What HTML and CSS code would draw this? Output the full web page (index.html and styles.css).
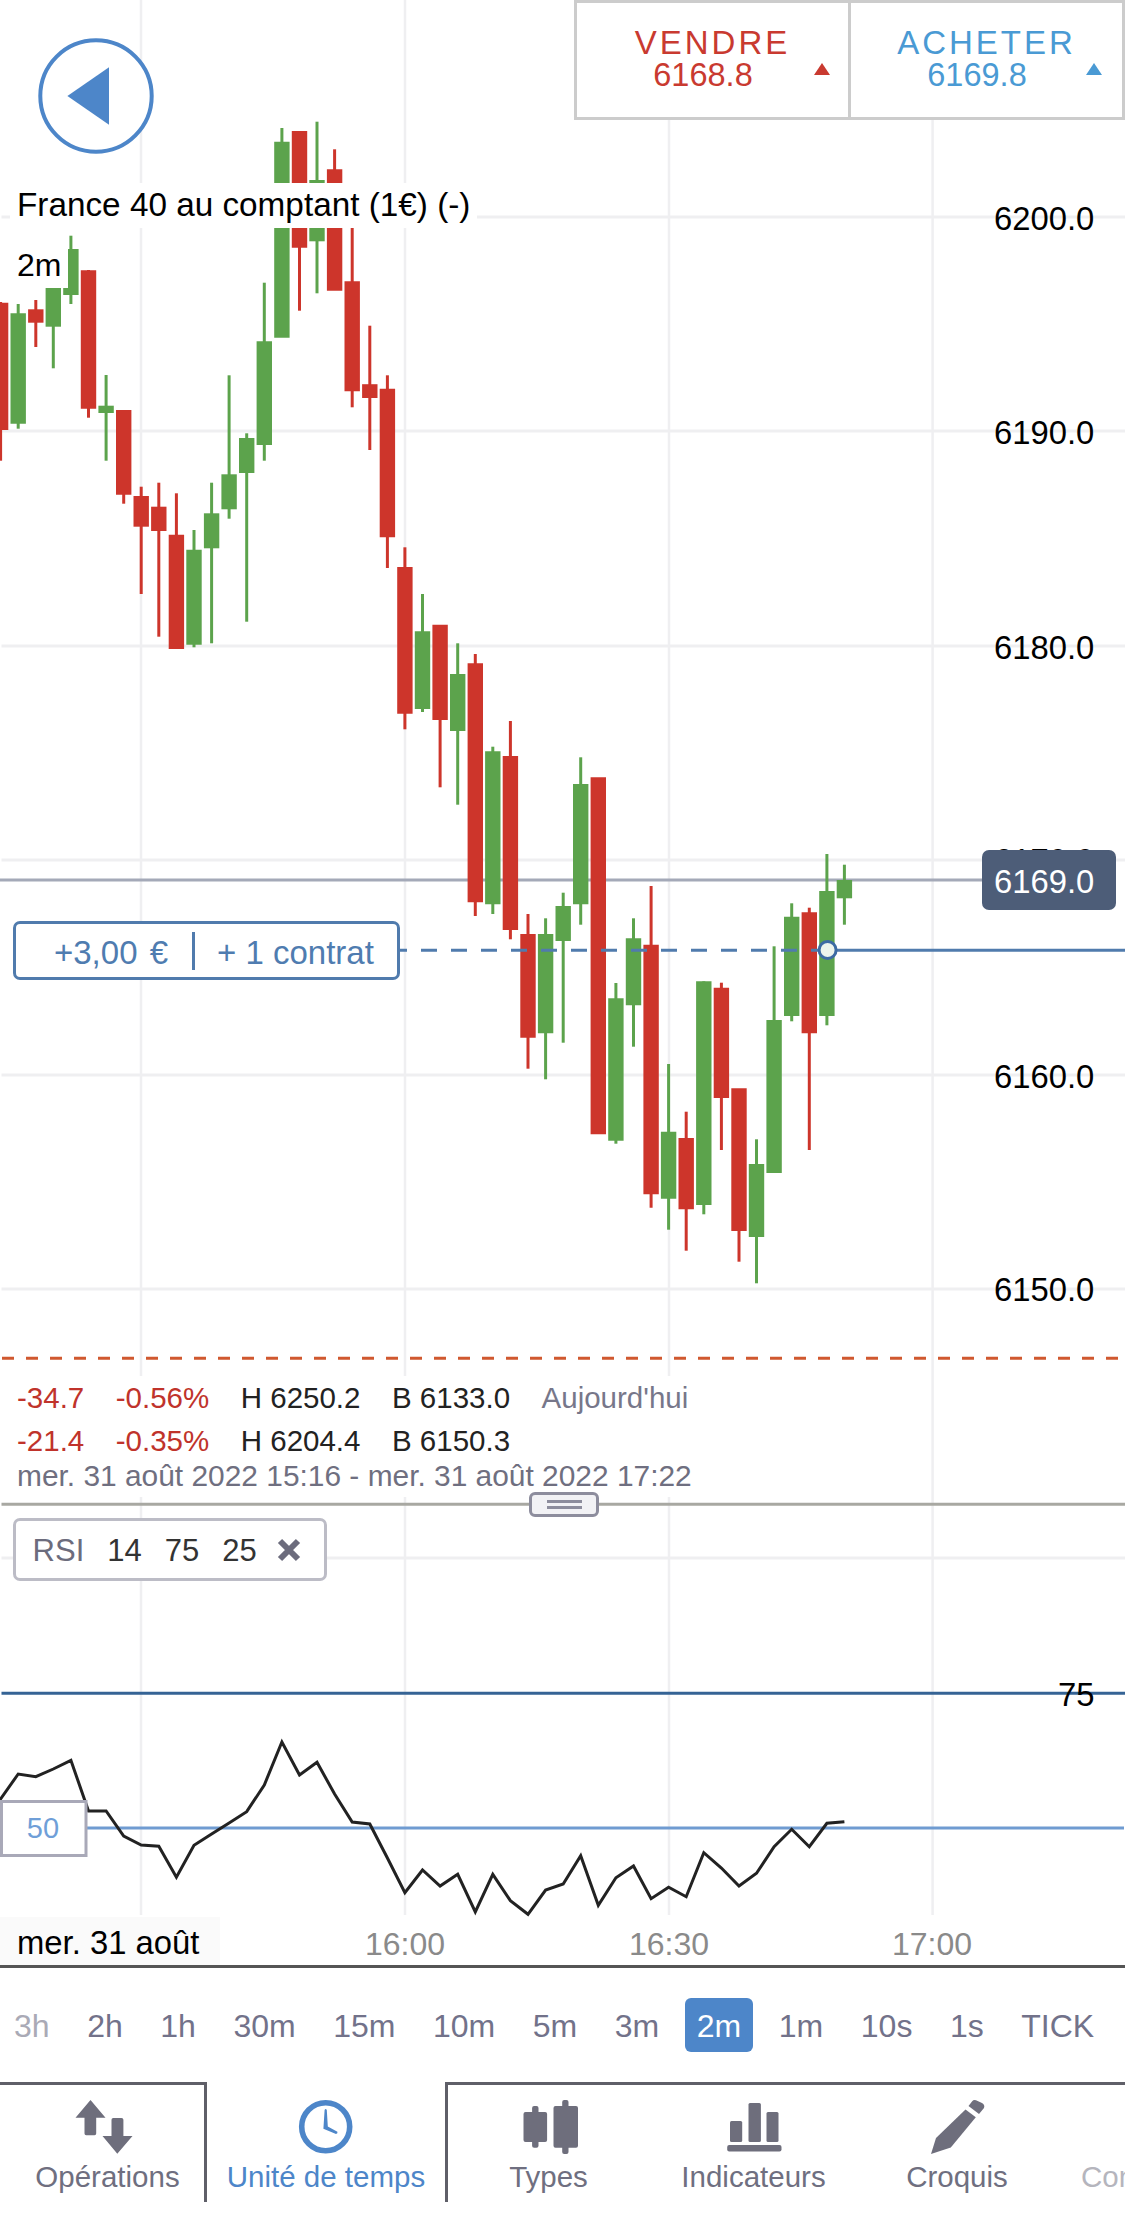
FILE: index.html
```html
<!DOCTYPE html>
<html lang="fr">
<head>
<meta charset="utf-8">
<title>France 40 au comptant</title>
<link rel="stylesheet" href="styles.css">
</head>
<body>
<div class="page">
  <section class="chart">
    <svg class="plot" viewBox="0 0 1125 1965" width="1125" height="1965">
      <g class="grid">
        <path d="M141 0V1915M405 0V1915M669 0V1915M932.6 0V1915"/>
        <path class="grid-h" d="M1.5 217H1125M1.5 431H1125M1.5 646H1125M1.5 860H1125M1.5 1075H1125M1.5 1289H1125M1.5 1558H1125"/>
      </g>
      <path class="last-price" d="M0 880H985"/>
      <g class="dn"><path class="w" d="M0.6 302V460.7"/><path class="b" d="M0.6 302.7V430"/></g>
      <g class="up"><path class="w" d="M18.2 304V428.7"/><path class="b" d="M18.2 313.3V423.7"/></g>
      <g class="dn"><path class="w" d="M35.8 300V347"/><path class="b" d="M35.8 309.3V322.7"/></g>
      <g class="up"><path class="w" d="M53.3 288V368.3"/><path class="b" d="M53.3 280V326.7"/></g>
      <g class="up"><path class="w" d="M70.9 235.7V304"/><path class="b" d="M70.9 249V295"/></g>
      <g class="dn"><path class="w" d="M88.5 270V417.7"/><path class="b" d="M88.5 270.3V408.7"/></g>
      <g class="up"><path class="w" d="M106.1 375V460.7"/><path class="b" d="M106.1 405.7V413"/></g>
      <g class="dn"><path class="w" d="M123.7 410V503.7"/><path class="b" d="M123.7 410V494.7"/></g>
      <g class="dn"><path class="w" d="M141.2 486.7V594"/><path class="b" d="M141.2 496V526.7"/></g>
      <g class="dn"><path class="w" d="M158.8 482.7V636.7"/><path class="b" d="M158.8 506.7V531"/></g>
      <g class="dn"><path class="w" d="M176.4 493.3V649"/><path class="b" d="M176.4 534.7V649"/></g>
      <g class="up"><path class="w" d="M194 530V647.3"/><path class="b" d="M194 549.7V644.7"/></g>
      <g class="up"><path class="w" d="M211.6 482.7V643.3"/><path class="b" d="M211.6 513.3V548.3"/></g>
      <g class="up"><path class="w" d="M229.1 375.3V518.7"/><path class="b" d="M229.1 474.3V509.3"/></g>
      <g class="up"><path class="w" d="M246.7 433.3V621.7"/><path class="b" d="M246.7 438V473"/></g>
      <g class="up"><path class="w" d="M264.3 282.7V460.7"/><path class="b" d="M264.3 341.3V445"/></g>
      <g class="up"><path class="w" d="M281.9 128V337"/><path class="b" d="M281.9 141.7V337.7"/></g>
      <g class="dn"><path class="w" d="M299.5 131V310.7"/><path class="b" d="M299.5 131V247.7"/></g>
      <g class="up"><path class="w" d="M317 121.7V293.3"/><path class="b" d="M317 180V241.3"/></g>
      <g class="dn"><path class="w" d="M334.6 149.3V290"/><path class="b" d="M334.6 169.3V290.7"/></g>
      <g class="dn"><path class="w" d="M352.2 200V407.3"/><path class="b" d="M352.2 281.3V391.3"/></g>
      <g class="dn"><path class="w" d="M369.8 325.7V450"/><path class="b" d="M369.8 384.2V398"/></g>
      <g class="dn"><path class="w" d="M387.4 375.3V568"/><path class="b" d="M387.4 388.7V537.3"/></g>
      <g class="dn"><path class="w" d="M404.9 547.3V729.3"/><path class="b" d="M404.9 567V713.7"/></g>
      <g class="up"><path class="w" d="M422.5 594V712"/><path class="b" d="M422.5 631.3V709"/></g>
      <g class="dn"><path class="w" d="M440.1 625V787.3"/><path class="b" d="M440.1 624.7V720"/></g>
      <g class="up"><path class="w" d="M457.7 643.3V804.7"/><path class="b" d="M457.7 674V731"/></g>
      <g class="dn"><path class="w" d="M475.3 654V916"/><path class="b" d="M475.3 663.3V902.3"/></g>
      <g class="up"><path class="w" d="M492.8 746.7V914"/><path class="b" d="M492.8 751.3V904.3"/></g>
      <g class="dn"><path class="w" d="M510.4 721V939.3"/><path class="b" d="M510.4 756V930"/></g>
      <g class="dn"><path class="w" d="M528 914V1068.7"/><path class="b" d="M528 934V1037.7"/></g>
      <g class="up"><path class="w" d="M545.6 918.3V1079.3"/><path class="b" d="M545.6 934V1033.3"/></g>
      <g class="up"><path class="w" d="M563.2 892.7V1042.7"/><path class="b" d="M563.2 906V941"/></g>
      <g class="up"><path class="w" d="M580.7 757.3V924.7"/><path class="b" d="M580.7 784V904.3"/></g>
      <g class="dn"><path class="w" d="M598.3 778V1134"/><path class="b" d="M598.3 777.3V1134.3"/></g>
      <g class="up"><path class="w" d="M615.9 983V1143.7"/><path class="b" d="M615.9 998.3V1140.7"/></g>
      <g class="up"><path class="w" d="M633.5 918.3V1046.7"/><path class="b" d="M633.5 938.3V1005.3"/></g>
      <g class="dn"><path class="w" d="M651.1 886V1207.7"/><path class="b" d="M651.1 944.7V1194.3"/></g>
      <g class="up"><path class="w" d="M668.6 1064V1229.7"/><path class="b" d="M668.6 1131.7V1198.7"/></g>
      <g class="dn"><path class="w" d="M686.2 1111.7V1250.7"/><path class="b" d="M686.2 1138V1209.3"/></g>
      <g class="up"><path class="w" d="M703.8 981.3V1214.3"/><path class="b" d="M703.8 981.3V1205"/></g>
      <g class="dn"><path class="w" d="M721.4 982.7V1150"/><path class="b" d="M721.4 987.7V1098"/></g>
      <g class="dn"><path class="w" d="M739 1089V1261.7"/><path class="b" d="M739 1088.3V1231"/></g>
      <g class="up"><path class="w" d="M756.5 1139.3V1283.3"/><path class="b" d="M756.5 1164V1237"/></g>
      <g class="up"><path class="w" d="M774.1 946.3V1173"/><path class="b" d="M774.1 1020V1173"/></g>
      <g class="up"><path class="w" d="M791.7 903.3V1021.3"/><path class="b" d="M791.7 916.7V1016"/></g>
      <g class="dn"><path class="w" d="M809.3 907.7V1150"/><path class="b" d="M809.3 912.3V1033.3"/></g>
      <g class="up"><path class="w" d="M826.9 854V1025.3"/><path class="b" d="M826.9 891V1016"/></g>
      <g class="up"><path class="w" d="M844.4 864.7V924.7"/><path class="b" d="M844.4 880V898.3"/></g>
      <path class="pos-dash" d="M391 950.3H818"/>
      <path class="pos-line" d="M837 950.3H1125"/>
      <circle class="pos-dot" cx="827.6" cy="950" r="8.5"/>
      <path class="low-dash" d="M2 1358.3H1118"/>
      <path class="rule" d="M1.5 1504.3H1125"/>
      <text class="tick" x="994" y="230">6200.0</text>
      <text class="tick" x="994" y="444">6190.0</text>
      <text class="tick" x="994" y="659">6180.0</text>
      <text class="tick" x="994" y="872">6170.0</text>
      <text class="tick" x="994" y="1088">6160.0</text>
      <text class="tick" x="994" y="1301">6150.0</text>
      <rect class="last-box" x="982" y="850" width="134" height="60" rx="7"/>
      <text class="tick last-text" x="994" y="892.5">6169.0</text>
      <path class="rsi75" d="M1.5 1693.3H1125"/>
      <path class="rsi50" d="M87 1828H1124"/>
      <polyline class="rsi" points="0,1800 0.6,1799 18.2,1774 35.8,1776.7 53.3,1769 70.9,1760.3 88.5,1811 106.1,1811 123.7,1836 141.2,1845 158.8,1846.3 176.4,1877.3 194,1845.3 211.6,1834 229.1,1823 246.7,1811.7 264.3,1785 281.9,1742 299.5,1775 317,1762.3 334.6,1794 352.2,1822 369.8,1824 387.4,1858 404.9,1892.7 422.5,1870 440.1,1886 457.7,1874.3 475.3,1912 492.8,1874.3 510.4,1900.7 528,1914.3 545.6,1890 563.2,1884 580.7,1855.7 598.3,1905.3 615.9,1877.7 633.5,1866 651.1,1898.7 668.6,1887.3 686.2,1896.7 703.8,1852.7 721.4,1868 739,1886 756.5,1873.3 774.1,1846.7 791.7,1829.3 809.3,1846.7 826.9,1823.3 844.4,1821.7"/>
      <rect class="box50" x="1.5" y="1801.5" width="84.5" height="54"/>
      <text class="text50" x="43" y="1838">50</text>
      <text class="tick" x="1058" y="1706">75</text>
      <text class="time" x="405" y="1955">16:00</text>
      <text class="time" x="669" y="1955">16:30</text>
      <text class="time" x="932" y="1955">17:00</text>
    </svg>

    <div class="quote">
      <button class="quote-btn sell">
        <span class="quote-label">VENDRE</span>
        <span class="quote-price">6168.8</span>
        <i class="tri"></i>
      </button>
      <button class="quote-btn buy">
        <span class="quote-label">ACHETER</span>
        <span class="quote-price">6169.8</span>
        <i class="tri"></i>
      </button>
    </div>

    <button class="back" aria-label="Retour">
      <svg viewBox="38 38 116 116" width="116" height="116">
        <circle cx="96" cy="96" r="55.7" class="back-ring"/>
        <path d="M67.4 96 109 67.3V124.7Z" class="back-arrow"/>
      </svg>
    </button>

    <div class="instrument">France 40 au comptant (1€) (-)</div>
    <div class="interval">2m</div>

    <div class="position">
      <span class="position-pnl">+3,00 €</span>
      <i class="position-sep"></i>
      <span>+ 1 contrat</span>
    </div>

    <div class="stats">
      <div class="stats-row first">
        <span class="neg">-34.7</span><span class="neg">-0.56%</span><span>H 6250.2</span><span>B 6133.0</span><span class="muted">Aujourd'hui</span>
      </div>
      <div class="stats-row second">
        <span class="neg">-21.4</span><span class="neg">-0.35%</span><span>H 6204.4</span><span>B 6150.3</span>
      </div>
      <div class="stats-range">mer. 31 août 2022 15:16 - mer. 31 août 2022 17:22</div>
    </div>

    <div class="handle"><i></i><i></i></div>

    <div class="chip">
      <span class="chip-name">RSI</span><span>14</span><span>75</span><span>25</span>
      <svg class="chip-x" viewBox="0 0 24 24" width="24" height="24"><path d="M3 3 21 21M21 3 3 21"/></svg>
    </div>

    <div class="date-label">mer. 31 août</div>
  </section>

  <nav class="timeframes">
    <a class="tf fade">3h</a><a class="tf">2h</a><a class="tf">1h</a><a class="tf">30m</a><a class="tf">15m</a><a class="tf">10m</a><a class="tf">5m</a><a class="tf">3m</a><a class="tf active">2m</a><a class="tf">1m</a><a class="tf">10s</a><a class="tf">1s</a><a class="tf">TICK</a>
  </nav>

  <nav class="tabs">
    <a class="tab tab-ops">
      <svg viewBox="71.5 2100 72 54" width="72" height="54" class="tab-icon">
        <path d="M90 2100 105 2117.7H95.7V2133.5Q95.7 2135.3 94 2135.3H85.7Q84 2135.3 84 2133.5V2117.7H75Z"/>
        <path d="M116.8 2153.7 102 2136H111V2119.8Q111 2118 112.8 2118H121Q122.9 2118 122.9 2119.8V2136H132Z"/>
      </svg>
      <span>Opérations</span>
    </a>
    <a class="tab tab-active">
      <svg viewBox="296 2100 60 54" width="60" height="54" class="tab-icon">
        <circle class="clock-ring" cx="325.7" cy="2126.7" r="24"/>
        <path class="clock-hand" d="M324.6 2110Q325.7 2108 326.8 2110L327.8 2126.6 337.4 2131.8Q338 2133.8 336 2134L323.4 2128.8Z"/>
      </svg>
      <span>Unité de temps</span>
    </a>
    <a class="tab tab-types">
      <svg viewBox="518.5 2100 60 54" width="60" height="54" class="tab-icon">
        <path d="M531.6 2108Q531.6 2106 533.6 2106H536Q538 2106 538 2108V2112H544.6Q546.6 2112 546.6 2114V2140Q546.6 2142 544.6 2142H538V2145.7Q538 2147.7 536 2147.7H533.6Q531.6 2147.7 531.6 2145.7V2142H525Q523 2142 523 2140V2114Q523 2112 525 2112H531.6Z"/>
        <path d="M561.7 2102Q561.7 2100 563.7 2100H566Q568 2100 568 2102V2106H575.5Q577.5 2106 577.5 2108V2145.7Q577.5 2147.7 575.5 2147.7H568V2152Q568 2154 566 2154H563.7Q561.7 2154 561.7 2152V2147.7H555Q553 2147.7 553 2145.7V2108Q553 2106 555 2106H561.7Z"/>
      </svg>
      <span>Types</span>
    </a>
    <a class="tab tab-ind">
      <svg viewBox="723.5 2100 60 54" width="60" height="54" class="tab-icon">
        <rect x="729.5" y="2121" width="12.2" height="21" rx="1.5"/>
        <rect x="748" y="2103" width="12.4" height="39" rx="1.5"/>
        <rect x="766" y="2112" width="12" height="30" rx="1.5"/>
        <rect x="726.7" y="2145" width="54.3" height="6.5" rx="2"/>
      </svg>
      <span>Indicateurs</span>
    </a>
    <a class="tab tab-draw">
      <svg viewBox="927 2100 60 54" width="60" height="54" class="tab-icon">
        <path d="M931 2154 936 2138 965.5 2109.5 975.8 2117.2 950.8 2147.5Z"/>
        <path d="M968.5 2106 972 2101.5Q973.5 2099.5 976 2100.2L982 2103Q985.2 2105 984 2108L979 2114Z"/>
      </svg>
      <span>Croquis</span>
    </a>
    <a class="tab tab-more">
      <span>Comparer</span>
    </a>
  </nav>
</div>
</body>
</html>
```
FILE: styles.css
```css
* { box-sizing: border-box; }
html, body { margin: 0; padding: 0; background: #fff; }
body { font-family: "Liberation Sans", Arial, sans-serif; color: #000; }
.page { width: 1125px; height: 2215px; overflow: hidden; display: flex; flex-direction: column; }
i { display: block; }

/* chart */
.chart { position: relative; height: 1968px; border-bottom: 3px solid #555; flex: none; }
.plot { display: block; }
.grid path { fill: none; stroke: #efeff1; stroke-width: 2.5; }
.grid .grid-h { stroke-width: 3; }
.last-price { stroke: #a4a9b8; stroke-width: 3; }
.up .w, .up .b { stroke: #5ca34c; }
.dn .w, .dn .b { stroke: #cd352b; }
.w { stroke-width: 3; fill: none; }
.b { stroke-width: 15.4; fill: none; }
.pos-dash { stroke: #507bad; stroke-width: 3; stroke-dasharray: 16 14; fill: none; }
.pos-line { stroke: #507bad; stroke-width: 3; fill: none; }
.pos-dot { fill: #edf4ec; stroke: #3d6ba3; stroke-width: 3; }
.low-dash { stroke: #d0582f; stroke-width: 3; stroke-dasharray: 12 12; fill: none; }
.rule { stroke: #a8a8a2; stroke-width: 3; }
.tick { font-size: 32.8px; fill: #000; }
.last-box { fill: #4d5d78; }
.last-text { fill: #fff; }
.rsi75 { stroke: #356395; stroke-width: 3; }
.rsi50 { stroke: #6f9bd1; stroke-width: 3; }
.rsi { fill: none; stroke: #222; stroke-width: 3; stroke-linejoin: miter; }
.box50 { fill: #fff; stroke: #a9a9b8; stroke-width: 3; }
.text50 { font-size: 29px; fill: #6f9fd8; text-anchor: middle; }
.time { font-size: 32px; fill: #8a8a8a; text-anchor: middle; }

/* bid / ask */
.quote { position: absolute; top: 0; left: 574px; right: 0; height: 120px; display: flex; border: 3px solid #ccc; background: #fff; }
.quote-btn { position: relative; flex: 1 1 0; margin: 0; border: 0; padding: 23px 0 0; background: none; font: inherit; display: flex; flex-direction: column; align-items: center; }
.quote-btn + .quote-btn { border-left: 3px solid #ccc; }
.quote-label { font-size: 33px; line-height: 33px; letter-spacing: 3px; }
.quote-price { font-size: 32.5px; line-height: 33px; padding-right: 19px; }
.sell { color: #c93a30; }
.buy { color: #4a9ad4; }
.tri { position: absolute; top: 60px; width: 0; height: 0; border-left: 8px solid transparent; border-right: 8px solid transparent; border-bottom: 12.5px solid currentColor; }
.sell .tri { left: 237px; }
.buy .tri { left: 235px; }

/* back */
.back { position: absolute; left: 38px; top: 38px; width: 116px; height: 116px; padding: 0; border: 0; background: none; }
.back svg { display: block; }
.back-ring { fill: #fff; stroke: #4d86c9; stroke-width: 4; }
.back-arrow { fill: #4d86c9; }

/* labels */
.instrument { position: absolute; left: 10px; top: 183px; width: 467px; height: 45px; padding-left: 7px; background: #fff; font-size: 33.3px; line-height: 44px; white-space: nowrap; }
.interval { position: absolute; left: 0; top: 228px; width: 68px; height: 60px; padding: 7px 0 0 17px; background: #fff; font-size: 32px; line-height: 60px; }

/* position */
.position { position: absolute; left: 12.6px; top: 921px; width: 387.4px; height: 59px; padding: 4px 0 0 38.4px; border: 3px solid #507bad; border-radius: 7px; background: #fff; color: #4f7cb0; font-size: 33px; display: flex; align-items: center; gap: 24px; }
.position-pnl { word-spacing: 3px; }
.position-sep { width: 3px; height: 38px; margin: -4px -2px 0 0; background: #507bad; }

/* stats */
.stats { position: absolute; left: 0; top: 1376px; padding: 0 8px 3px 17px; background: #fff; font-size: 29.5px; color: #222; }
.stats-row { display: flex; gap: 31.5px; }
.stats-row.first { line-height: 43px; height: 43px; }
.stats-row.second { line-height: 43px; height: 39px; }
.neg { color: #c0332b; }
.muted { color: #77778a; }
.stats-range { height: 36px; line-height: 36px; font-size: 29.9px; color: #6f6f80; white-space: nowrap; }

.handle { position: absolute; left: 529px; top: 1491.7px; width: 70px; height: 25.6px; border: 3px solid #8d8d9d; border-radius: 6px; background: #f2f2f5; display: flex; flex-direction: column; align-items: center; justify-content: center; gap: 3px; }
.handle i { width: 35px; height: 3px; background: #8d8d9d; }

.chip { position: absolute; left: 12.6px; top: 1518px; width: 314px; height: 63px; padding: 2px 0 0 17px; border: 3px solid #bcbcc6; border-radius: 7px; background: #fff; color: #333; font-size: 31px; display: flex; align-items: center; gap: 23px; }
.chip-name { color: #6c6c7d; }
.chip-x { flex: none; margin: -2px 0 0 -3px; }
.chip-x path { stroke: #6c6c7d; stroke-width: 6; fill: none; }

.date-label { position: absolute; left: 0; top: 1917px; width: 220px; height: 48px; padding-left: 17px; background: #fafafa; font-size: 32.8px; line-height: 52px; white-space: nowrap; }

/* timeframes */
.timeframes { height: 114px; padding: 30px 0 30px 2px; display: flex; gap: 13.55px; flex: none; }
.tf { height: 54px; padding: 1px 12px 0; border-radius: 6px; font-size: 32px; line-height: 54px; color: #72728a; }
.tf.fade { color: #aaaab6; }
.tf.active { background: #4d86c9; color: #fff; }

/* tabs */
.tabs { height: 120px; display: grid; grid-template-columns: 207px 238px 204px 209px 198px 69px; flex: none; }
.tab { display: flex; flex-direction: column; align-items: center; padding-top: 15px; border-top: 3px solid #5f5f68; color: #6f6f80; font-size: 29.5px; line-height: 34px; white-space: nowrap; overflow: hidden; }
.tab span { margin-top: 6px; }
.tab-icon { display: block; overflow: visible; fill: #6e6e7c; flex: none; }
.tab-ops { border-right: 3px solid #5f5f68; padding-left: 11px; }
.tab-active { border-top: 0; padding-top: 18px; color: #4d86c9; }
.tab-types { border-left: 3px solid #5f5f68; }
.tab-more { align-items: flex-start; padding-left: 25px; padding-top: 69px; color: #b5b5bd; }
.clock-ring { fill: none; stroke: #4d86c9; stroke-width: 5.6; }
.clock-hand { fill: #4d86c9; }
```
